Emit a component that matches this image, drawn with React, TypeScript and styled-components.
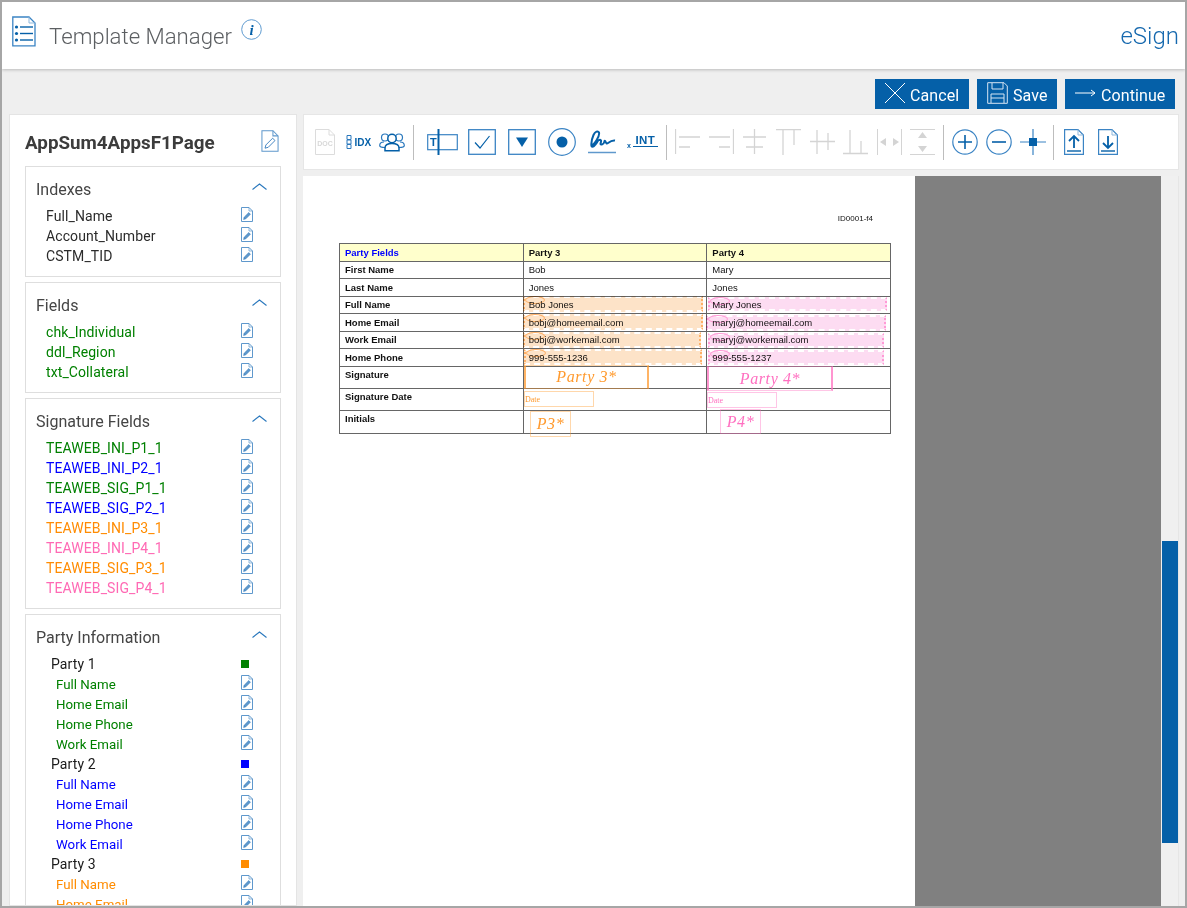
import styled, { createGlobalStyle } from "styled-components";

const BLUE = "#0560a8";
const LINE = "#5f98cc";
const OFF = "#d4d4d4";

const GlobalStyle = createGlobalStyle`
  html, body {
    margin: 0;
    padding: 0;
    height: 100%;
    overflow: hidden;
    background: #efefef;
    font-family: Roboto, "Liberation Sans", sans-serif;
  }
`;

const Frame = styled.div`
  box-sizing: border-box;
  width: 1187px;
  height: 908px;
  border: 2px solid #a6a6a6;
  background: #efefef;
  overflow: hidden;
  display: flex;
  flex-direction: column;
`;

const Header = styled.header`
  flex: none;
  height: 67px;
  box-sizing: border-box;
  background: #fff;
  box-shadow: 0 1px 3px rgba(0, 0, 0, 0.22);
  display: flex;
  align-items: flex-start;
  padding: 14px 6px 0 10px;
  position: relative;
`;

const Title = styled.h1`
  margin: 5px 0 0 13px;
  font-size: 22.2px;
  line-height: 30px;
  font-weight: 300;
  color: #5c5f62;
`;

const InfoBadge = styled.span`
  margin: 3px 0 0 9px;
  width: 21px;
  height: 21px;
`;

const Product = styled.div`
  margin: 5px 0 0 auto;
  font-size: 24px;
  line-height: 30px;
  font-weight: 300;
  color: #1568ae;
`;

const ActionBar = styled.div`
  flex: none;
  height: 45px;
  padding-top: 10px;
  box-sizing: border-box;
  display: flex;
  justify-content: flex-end;
  gap: 8px;
  padding-right: 10px;
`;

const ActionButton = styled.button<{ $w: number }>`
  width: ${(p) => p.$w}px;
  height: 30px;
  border: 0;
  padding: 0 0 0 10px;
  background: ${BLUE};
  color: #fff;
  font-family: Roboto, sans-serif;
  font-size: 16px;
  letter-spacing: 0.1px;
  display: flex;
  align-items: center;
  gap: 5px;
  svg {
    flex: none;
    margin-top: -3px;
  }
  span {
    margin-top: 3px;
  }
`;

const Workspace = styled.div`
  flex: 1;
  min-height: 0;
  display: flex;
  gap: 6px;
  padding: 0 6px 0 7px;
`;

const Sidebar = styled.aside`
  flex: none;
  width: 288px;
  box-sizing: border-box;
  background: #fff;
  border: 1px solid #e4e4e4;
  padding: 0 15px;
  overflow: hidden;
`;

const SidebarTop = styled.div`
  height: 51px;
  display: flex;
  align-items: center;
  justify-content: space-between;
  padding: 0 2px 0 0;
  h2 {
    margin: 5px 0 0;
    font-size: 18.8px;
    font-weight: 700;
    color: #3c3c3c;
  }
  svg {
    margin-top: 1px;
  }
`;

const Box = styled.section`
  border: 1px solid #dedede;
  margin-bottom: 5px;
  padding: 10px 13px 10px 10px;
`;

const BoxHead = styled.div`
  display: flex;
  align-items: center;
  justify-content: space-between;
  height: 24px;
  margin-bottom: 5px;
  font-size: 16px;
  color: #454545;
  svg {
    margin-top: -6px;
  }
`;

const Row = styled.div<{ $color?: string; $indent: number; $small?: boolean }>`
  height: 20px;
  display: flex;
  align-items: center;
  justify-content: space-between;
  padding: 0 14px 0 ${(p) => p.$indent}px;
  font-size: ${(p) => (p.$small ? 13.3 : 14)}px;
  letter-spacing: ${(p) => (p.$small ? 0 : 0.1)}px;
  color: ${(p) => p.$color ?? "#2b2b2b"};
  svg {
    margin-top: -3px;
  }
`;

const Swatch = styled.i<{ $color: string }>`
  width: 8px;
  height: 8px;
  margin: -1px 4px 0 0;
  background: ${(p) => p.$color};
`;

const Main = styled.main`
  flex: 1;
  min-width: 0;
  display: flex;
  flex-direction: column;
  gap: 6px;
`;

const Toolbar = styled.div`
  flex: none;
  height: 56px;
  box-sizing: border-box;
  background: #fff;
  border: 1px solid #e6e6e6;
  padding-left: 11px;
  display: flex;
  align-items: center;
`;

const Tool = styled.span<{ $after?: number }>`
  display: flex;
  margin-right: ${(p) => p.$after ?? 0}px;
`;

const Sep = styled.i<{ $l?: number; $r?: number }>`
  width: 1px;
  height: 35px;
  background: #bdbdbd;
  margin: 0 ${(p) => p.$r ?? 13}px 0 ${(p) => p.$l ?? 8}px;
`;

const Viewer = styled.div`
  flex: 1;
  min-height: 0;
  display: flex;
  background: #808080;
  border-right: 1px solid #e6e6e6;
`;

const Sheet = styled.div`
  position: relative;
  flex: none;
  width: 612px;
  background: #fff;
  padding: 38px 0 0 36px;
  box-sizing: border-box;
  font-family: "Liberation Sans", Arial, sans-serif;
`;

const SheetId = styled.div`
  width: 534px;
  height: 29px;
  font-size: 8px;
  line-height: 9px;
  text-align: right;
  color: #111;
`;

const Table = styled.table`
  width: 552px;
  table-layout: fixed;
  border-collapse: collapse;
  font-size: 9.5px;
  color: #111;
`;

const Tr = styled.tr<{ $h: number }>`
  height: ${(p) => p.$h}px;
`;

const Td = styled.td<{ $head?: boolean; $bold?: boolean; $top?: boolean; $color?: string; $line?: string }>`
  border: 1px solid #666;
  border-top-color: ${(p) => p.$line ?? "#666"};
  padding: ${(p) => (p.$top ? "3px 0 0 5px" : "0 0 0 5px")};
  vertical-align: ${(p) => (p.$top ? "top" : "middle")};
  line-height: 10px;
  background: ${(p) => (p.$head ? "#ffffcc" : "transparent")};
  font-weight: ${(p) => (p.$bold ? 700 : 400)};
  color: ${(p) => p.$color ?? "#111"};
`;

const TextField = styled.div<{ $x: number; $y: number; $w: number; $h: number; $tone: string; $edge: string }>`
  position: absolute;
  left: ${(p) => p.$x}px;
  top: ${(p) => p.$y}px;
  width: ${(p) => p.$w}px;
  height: ${(p) => p.$h}px;
  box-sizing: border-box;
  background: ${(p) => p.$tone};
  border-top: 2px dashed #fff;
  border-bottom: 2px dashed #fff;
  border-left: 2px dotted ${(p) => p.$edge};
  border-right: 2px dotted ${(p) => p.$edge};
  mix-blend-mode: multiply;
  &::before {
    content: "";
    position: absolute;
    left: 0;
    top: -2px;
    width: 20px;
    height: 8px;
    box-sizing: border-box;
    border-radius: 50%;
    border: 1px solid ${(p) => p.$edge};
  }
`;

const SignBox = styled.div<{ $x: number; $y: number; $w: number; $h: number; $color: string; $strong?: boolean }>`
  position: absolute;
  left: ${(p) => p.$x}px;
  top: ${(p) => p.$y}px;
  width: ${(p) => p.$w}px;
  height: ${(p) => p.$h}px;
  box-sizing: border-box;
  display: flex;
  align-items: center;
  justify-content: center;
  color: ${(p) => p.$color};
  font-family: "Liberation Serif", serif;
  font-style: italic;
  font-size: 16px;
  letter-spacing: 0.6px;
  border: 1px solid ${(p) => p.$color}66;
  border-left: ${(p) => (p.$strong ? `2px solid ${p.$color}bb` : `1px solid ${p.$color}66`)};
  border-right: ${(p) => (p.$strong ? `2px solid ${p.$color}bb` : `1px solid ${p.$color}66`)};
`;

const DateBox = styled(SignBox)`
  justify-content: flex-start;
  font-style: normal;
  font-size: 8px;
  letter-spacing: 0;
  padding-left: 0;
  border-width: 1px;
`;

const Scrollbar = styled.div`
  flex: none;
  width: 17px;
  margin-left: auto;
  background: #f0f0f0;
  padding: 365px 0 0 1px;
  box-sizing: border-box;
`;

const ScrollThumb = styled.div`
  height: 302px;
  background: ${BLUE};
`;

const Svg = ({ w, h, vb, children }: { w: number; h: number; vb?: string; children: React.ReactNode }) => (
  <svg width={w} height={h} viewBox={vb ?? `0 0 ${w} ${h}`} fill="none">
    {children}
  </svg>
);

const EditIcon = ({ big }: { big?: boolean }) => (
  <Svg w={big ? 18 : 12} h={big ? 22 : 15} vb="0 0 12 15">
    <path d="M.5.5H8L11.5 4V14.5H.5Z" stroke={LINE} strokeWidth={big ? 0.7 : 1} />
    <path d="M8 .5V4H11.5" stroke={LINE} strokeWidth=".7" />
    <path d="M3.2 10.2 7.8 5.6 9.4 7.2 4.8 11.8 2.6 12.4Z" fill={big ? "#fff" : LINE} stroke="#2f78bb" strokeWidth=".6" />
  </Svg>
);

const ListDoc = () => (
  <Svg w={24} h={31}>
    <path d="M.8 1H17L23 7V29.8H.8Z" stroke="#3b84c4" strokeWidth="1.3" />
    <path d="M17 1V7H23" stroke="#8db7dc" strokeWidth="1" />
    {[11, 17.5, 24].map((y) => (
      <g key={y}>
        <circle cx="4.5" cy={y} r="1.6" fill={BLUE} />
        <path d={`M8 ${y}H21`} stroke={BLUE} strokeWidth="1.4" />
      </g>
    ))}
  </Svg>
);

const InfoIcon = () => (
  <Svg w={21} h={21}>
    <circle cx="10.5" cy="10.5" r="9.8" stroke="#5f9bd0" />
    <text x="10.5" y="15.5" textAnchor="middle" fontFamily="Liberation Serif, serif" fontStyle="italic" fontWeight="700" fontSize="15" fill={BLUE}>
      i
    </text>
  </Svg>
);

const Chevron = () => (
  <Svg w={15} h={7}>
    <path d="M.5 6.5 7.5 1 14.5 6.5" stroke="#2a78bd" strokeWidth="1.1" />
  </Svg>
);

const DocTool = () => (
  <Svg w={20} h={26}>
    <path d="M.5.5H14L19.5 6V25.5H.5Z" stroke="#dcdcdc" />
    <path d="M14 .5V6H19.5" stroke="#dcdcdc" />
    <text x="10" y="17" textAnchor="middle" fontSize="7" fontWeight="700" fontFamily="Liberation Sans" fill="#d8d8d8">DOC</text>
  </Svg>
);

const IdxTool = () => (
  <Svg w={25} h={16}>
    <path d="M1 1.5H5V5.5H1ZM1 6H5V10H1ZM1 10.500H5V14.500H1Z" stroke="#2a78bd" />
    <text x="8.500" y="12" fontSize="10" fontWeight="700" fontFamily="Liberation Sans" fill={BLUE}>IDX</text>
  </Svg>
);

const GroupTool = () => (
  <Svg w={26} h={20}>
    <circle cx="6" cy="5.500" r="3.500" stroke="#2a78bd" strokeWidth="1.200" />
    <circle cx="20" cy="5.500" r="3.500" stroke="#2a78bd" strokeWidth="1.200" />
    <path d="M5 10C2.500 10 .7 11.500 .7 13.500C.7 15 3 15.500 6 15.500M21 10C23.500 10 25.300 11.500 25.300 13.500C25.300 15 23 15.500 20 15.500" stroke="#2a78bd" strokeWidth="1.200" />
    <circle cx="13" cy="6.500" r="4.200" stroke={BLUE} strokeWidth="1.500" fill="#fff" />
    <path d="M6 18.800V16C6 13 9 11.500 13 11.500S20 13 20 16V18.800Z" stroke={BLUE} strokeWidth="1.500" fill="#fff" />
  </Svg>
);

const TextTool = () => (
  <Svg w={31} h={26}>
    <rect x=".7" y="5.700" width="29.600" height="15" stroke="#3b84c4" strokeWidth="1.200" />
    <path d="M11.500 0V26" stroke={BLUE} strokeWidth="2" />
    <text x="3" y="17" fontSize="11" fontWeight="700" fontFamily="Liberation Sans" fill={BLUE}>T</text>
  </Svg>
);

const CheckTool = () => (
  <Svg w={28} h={26}>
    <rect x=".7" y=".7" width="26.600" height="24.600" stroke="#3b84c4" strokeWidth="1.300" />
    <path d="M7 13.500 12 19 21.500 7" stroke={BLUE} strokeWidth="1.200" />
  </Svg>
);

const DropTool = () => (
  <Svg w={28} h={26}>
    <rect x=".7" y=".7" width="26.600" height="24.600" stroke="#3b84c4" strokeWidth="1.300" />
    <path d="M8 8.500H20L14 18Z" fill={BLUE} />
  </Svg>
);

const RadioTool = () => (
  <Svg w={28} h={28}>
    <circle cx="14" cy="14" r="13.300" stroke="#3b84c4" strokeWidth="1.200" />
    <circle cx="14" cy="14" r="5.500" fill={BLUE} />
  </Svg>
);

const SignTool = () => (
  <Svg w={28} h={24}>
    <path
      d="M3 15.500C6 15 12 6.500 11 2.500C10 .5 7 1.500 5.500 5C4 8.500 3 13 3.500 16C4.500 18 7 15.500 9 12.500C9.500 10.500 12 9 13 10.500C13.500 12.500 11 15 14 14.500S16 10 17 11 18 14.500 20 13 24 10 27 10.500"
      stroke={BLUE}
      strokeWidth="2"
    />
    <path d="M0 22.500H28" stroke="#5f98cc" strokeWidth="1.500" />
  </Svg>
);

const IntTool = () => (
  <Svg w={31} h={16}>
    <text x="0" y="14" fontSize="7" fontWeight="700" fontFamily="Liberation Sans" fill={BLUE}>x</text>
    <text x="8.500" y="10" fontSize="11.500" fontWeight="700" letterSpacing=".4" fontFamily="Liberation Sans" fill={BLUE}>INT</text>
    <path d="M6 12.500H31" stroke={BLUE} />
  </Svg>
);

const alignTools: [string, number][] = [
  ["M.5 0V25 M4 8H25 M4 18H15", 9],
  ["M24.500 0V25 M0 8H21 M10 18H21", 9],
  ["M11.500 0V25 M0 8H23 M3 18H20", 8],
  ["M0 .5H25 M7 1V26 M18 1V16", 9],
  ["M0 12.500H25 M7 1V25 M18 4V21", 8],
  ["M0 24.500H25 M7 1V24 M18 12V24", 9],
];

const AlignTool = ({ d }: { d: string }) => (
  <Svg w={25} h={26}>
    <path d={d} stroke={OFF} strokeWidth="1.300" />
  </Svg>
);

const SpreadH = () => (
  <Svg w={25} h={26}>
    <path d="M.5 0V26M24.500 0V26" stroke={OFF} />
    <path d="M9 9V17L3 13ZM16 9V17L22 13Z" fill={OFF} />
  </Svg>
);

const SpreadV = () => (
  <Svg w={25} h={26}>
    <path d="M0 .5H25M0 25.500H25" stroke={OFF} />
    <path d="M8 9H17L12.500 3ZM8 17H17L12.500 23Z" fill={OFF} />
  </Svg>
);

const ZoomTool = ({ plus }: { plus?: boolean }) => (
  <Svg w={26} h={26}>
    <circle cx="13" cy="13" r="12.200" stroke="#3b84c4" strokeWidth="1.200" />
    <path d={plus ? "M6 13H20M13 6V20" : "M6 13H20"} stroke={BLUE} strokeWidth="1.600" />
  </Svg>
);

const FitTool = () => (
  <Svg w={26} h={26}>
    <path d="M0 13H26M13 0V26" stroke="#3b84c4" strokeWidth="1.200" />
    <rect x="9" y="9" width="8" height="8" fill={BLUE} />
  </Svg>
);

const PageTool = ({ up }: { up?: boolean }) => (
  <Svg w={20} h={26}>
    <path d="M.6.6H14L19.400 6V25.400H.6Z" stroke="#3b84c4" strokeWidth="1.200" />
    <path d="M14 .6V6H19.400" stroke="#8db7dc" />
    <path d={up ? "M10 19V7M5 12 10 7 15 12" : "M10 7V19M5 14 10 19 15 14"} stroke={BLUE} strokeWidth="1.800" />
    <path d="M3 22H17" stroke={BLUE} strokeWidth="1.400" />
  </Svg>
);

const GREEN = "#008000";
const PURE = "#0000ff";
const ORANGE = "#ff8c00";
const PINK = "#ff69b4";

const indexes = ["Full_Name", "Account_Number", "CSTM_TID"];
const fields = ["chk_Individual", "ddl_Region", "txt_Collateral"];
const signatures: [string, string][] = [
  ["TEAWEB_INI_P1_1", GREEN],
  ["TEAWEB_INI_P2_1", PURE],
  ["TEAWEB_SIG_P1_1", GREEN],
  ["TEAWEB_SIG_P2_1", PURE],
  ["TEAWEB_INI_P3_1", ORANGE],
  ["TEAWEB_INI_P4_1", PINK],
  ["TEAWEB_SIG_P3_1", ORANGE],
  ["TEAWEB_SIG_P4_1", PINK],
];
const parties: [string, string][] = [
  ["Party 1", GREEN],
  ["Party 2", PURE],
  ["Party 3", ORANGE],
];
const partyFields = ["Full Name", "Home Email", "Home Phone", "Work Email"];

const rows: [string, string, string, number, string?][] = [
  ["First Name", "Bob", "Mary", 17],
  ["Last Name", "Jones", "Jones", 18],
  ["Full Name", "Bob Jones", "Mary Jones", 17, "#c8c8c8"],
  ["Home Email", "bobj@homeemail.com", "maryj@homeemail.com", 18, "#222"],
  ["Work Email", "bobj@workemail.com", "maryj@workemail.com", 17, "#888"],
  ["Home Phone", "999-555-1236", "999-555-1237", 18, "#222"],
];
const tallRows: [string, number][] = [
  ["Signature", 22],
  ["Signature Date", 22],
  ["Initials", 23],
];

const inputs: [number, number, number, number, string, string][] = [
  [220, 120, 180, 16, "#fde3c8", "#ffb066"],
  [220, 138, 180, 16, "#fde3c8", "#ffb066"],
  [220, 156, 178, 16, "#fde3c8", "#ffb066"],
  [221, 173, 178, 16, "#fde3c8", "#ffb066"],
  [405, 121, 179, 14, "#fddcf2", "#ff9ad6"],
  [403, 139, 180, 16, "#fddcf2", "#ff9ad6"],
  [405, 157, 176, 15, "#fddcf2", "#ff9ad6"],
  [405, 174, 176, 15, "#fddcf2", "#ff9ad6"],
];

export default function App() {
  return (
    <Frame>
      <GlobalStyle />
      <Header>
        <ListDoc />
        <Title>Template Manager</Title>
        <InfoBadge>
          <InfoIcon />
        </InfoBadge>
        <Product>eSign</Product>
      </Header>
      <ActionBar>
        <ActionButton $w={94}>
          <Svg w={20} h={20}>
            <path d="M0 0 20 20M20 0 0 20" stroke="#fff" />
          </Svg>
          <span>Cancel</span>
        </ActionButton>
        <ActionButton $w={80}>
          <Svg w={21} h={22}>
            <path d="M.7.7H17L20.300 4V21.300H.7Z" stroke="#d5e4f2" />
            <path d="M5 1V7H16V1M4 21V12H17V21M4 16H17" stroke="#d5e4f2" />
          </Svg>
          <span>Save</span>
        </ActionButton>
        <ActionButton $w={110}>
          <Svg w={21} h={10}>
            <path d="M0 5H20M16 2 20 5 16 8" stroke="#fff" />
          </Svg>
          <span>Continue</span>
        </ActionButton>
      </ActionBar>
      <Workspace>
        <Sidebar>
          <SidebarTop>
            <h2>AppSum4AppsF1Page</h2>
            <EditIcon big />
          </SidebarTop>
          <Box>
            <BoxHead>
              Indexes
              <Chevron />
            </BoxHead>
            {indexes.map((n) => (
              <Row key={n} $indent={10}>
                {n}
                <EditIcon />
              </Row>
            ))}
          </Box>
          <Box>
            <BoxHead>
              Fields
              <Chevron />
            </BoxHead>
            {fields.map((n) => (
              <Row key={n} $indent={10} $color={GREEN}>
                {n}
                <EditIcon />
              </Row>
            ))}
          </Box>
          <Box>
            <BoxHead>
              Signature Fields
              <Chevron />
            </BoxHead>
            {signatures.map(([n, c]) => (
              <Row key={n} $indent={10} $color={c}>
                {n}
                <EditIcon />
              </Row>
            ))}
          </Box>
          <Box>
            <BoxHead>
              Party Information
              <Chevron />
            </BoxHead>
            {parties.map(([n, c]) => (
              <div key={n}>
                <Row $indent={15} $color="#1a1a1a">
                  {n}
                  <Swatch $color={c} />
                </Row>
                {partyFields.map((f) => (
                  <Row key={f} $indent={20} $color={c} $small>
                    {f}
                    <EditIcon />
                  </Row>
                ))}
              </div>
            ))}
          </Box>
        </Sidebar>
        <Main>
          <Toolbar>
            <Tool $after={11}><DocTool /></Tool>
            <Tool $after={8}><IdxTool /></Tool>
            <Tool><GroupTool /></Tool>
            <Sep />
            <Tool $after={10}><TextTool /></Tool>
            <Tool $after={12}><CheckTool /></Tool>
            <Tool $after={12}><DropTool /></Tool>
            <Tool $after={12}><RadioTool /></Tool>
            <Tool $after={11}><SignTool /></Tool>
            <Tool><IntTool /></Tool>
            <Sep $r={8} />
            {alignTools.map(([d, after]) => (
              <Tool key={d} $after={after}><AlignTool d={d} /></Tool>
            ))}
            <Tool $after={8}><SpreadH /></Tool>
            <Tool><SpreadV /></Tool>
            <Sep $r={8} />
            <Tool $after={8}><ZoomTool plus /></Tool>
            <Tool $after={8}><ZoomTool /></Tool>
            <Tool><FitTool /></Tool>
            <Sep $l={7} $r={10} />
            <Tool $after={14}><PageTool up /></Tool>
            <Tool><PageTool /></Tool>
          </Toolbar>
          <Viewer>
            <Sheet>
              <SheetId>ID0001-f4</SheetId>
              <Table>
                <tbody>
                  <Tr $h={18}>
                    <Td $head $bold $color="#0000ff">Party Fields</Td>
                    <Td $head $bold>Party 3</Td>
                    <Td $head $bold>Party 4</Td>
                  </Tr>
                  {rows.map(([label, a, b, h, line]) => (
                    <Tr key={label} $h={h}>
                      <Td $bold $line={line}>{label}</Td>
                      <Td $line={line}>{a}</Td>
                      <Td $line={line}>{b}</Td>
                    </Tr>
                  ))}
                  {tallRows.map(([label, h]) => (
                    <Tr key={label} $h={h}>
                      <Td $bold $top>{label}</Td>
                      <Td />
                      <Td />
                    </Tr>
                  ))}
                </tbody>
              </Table>
              {inputs.map(([x, y, w, h, tone, edge]) => (
                <TextField key={`${x}-${y}`} $x={x} $y={y} $w={w} $h={h} $tone={tone} $edge={edge} />
              ))}
              <SignBox $x={221} $y={189} $w={125} $h={24} $color="#ff9a2e" $strong>Party 3*</SignBox>
              <SignBox $x={404} $y={190} $w={126} $h={25} $color="#ff6fc0" $strong>Party 4*</SignBox>
              <DateBox $x={221} $y={215} $w={70} $h={16} $color="#ff9a2e">Date</DateBox>
              <DateBox $x={404} $y={216} $w={70} $h={16} $color="#ff6fc0">Date</DateBox>
              <SignBox $x={227} $y={235} $w={41} $h={26} $color="#ff9a2e">P3*</SignBox>
              <SignBox $x={417} $y={233} $w={41} $h={25} $color="#ff6fc0">P4*</SignBox>
            </Sheet>
            <Scrollbar>
              <ScrollThumb />
            </Scrollbar>
          </Viewer>
        </Main>
      </Workspace>
    </Frame>
  );
}
